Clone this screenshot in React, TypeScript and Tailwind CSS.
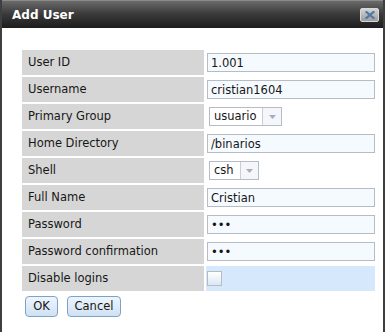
import React from 'react';

type Row =
  | { label: string; kind: 'text'; value: string }
  | { label: string; kind: 'password'; value: string }
  | { label: string; kind: 'select'; value: string; width: string; split: string }
  | { label: string; kind: 'check' };

const rows: Row[] = [
  { label: 'User ID', kind: 'text', value: '1.001' },
  { label: 'Username', kind: 'text', value: 'cristian1604' },
  { label: 'Primary Group', kind: 'select', value: 'usuario', width: 'w-[73px]', split: 'w-[53px]' },
  { label: 'Home Directory', kind: 'text', value: '/binarios' },
  { label: 'Shell', kind: 'select', value: 'csh', width: 'w-[50px]', split: 'w-[31px]' },
  { label: 'Full Name', kind: 'text', value: 'Cristian' },
  { label: 'Password', kind: 'password', value: 'abc' },
  { label: 'Password confirmation', kind: 'password', value: 'abc' },
  { label: 'Disable logins', kind: 'check' },
];

function Field({ row }: { row: Row }) {
  if (row.kind === 'check') {
    return (
      <span className="block ml-[1px] w-[15px] h-[15px] border border-[#b8bcc2] bg-gradient-to-b from-white to-[#dbe7f3]" />
    );
  }
  if (row.kind === 'select') {
    return (
      <div className={`ml-[3px] h-[19px] ${row.width} flex border border-[#b6bcc6] bg-white`}>
        <span className={`${row.split} flex items-center pl-[4px] border-r border-[#c9ced6]`}>{row.value}</span>
        <span className="flex-1 flex items-center justify-center bg-[#f4f6f9]">
          <svg width="7" height="4" viewBox="0 0 7 4">
            <path d="M0 0h7L3.5 4z" fill="#9fb0c9" />
          </svg>
        </span>
      </div>
    );
  }
  return (
    <input
      type={row.kind === 'password' ? 'password' : 'text'}
      readOnly
      value={row.value}
      className="block ml-[1px] w-[168px] h-[19px] border border-[#b6bcc6] bg-[#f5faff] px-[3px] text-[11.5px] text-[#161616] outline-none"
    />
  );
}

export default function App() {
  return (
    <div className="w-[385px] h-[332px] bg-white border-x-2 border-[#3f3f3f] font-['DejaVu_Sans',Verdana,sans-serif] text-[11.5px] text-[#161616] overflow-hidden">
      {/* Title bar */}
      <div className="h-[28px] border-t border-[#8a8a8a] bg-gradient-to-b from-[#6a6a6a] via-[#393939] to-[#1d1d1d] flex items-center justify-between pl-[10px] pr-[4px]">
        <span className="text-white font-bold text-[12px] pt-[1px]">Add User</span>
        <button className="w-[19px] h-[14px] rounded-[2px] border border-[#d8d8d8] bg-gradient-to-b from-[#d4d4d4] to-[#9c9c9c] flex items-center justify-center">
          <svg width="10" height="8" viewBox="0 0 10 8">
            <path d="M1.5 1l7 6M8.5 1l-7 6" stroke="#4d78a8" strokeWidth="2.2" strokeLinecap="square" />
          </svg>
        </button>
      </div>

      {/* Form */}
      <div className="pt-[20px] pl-[18px]">
        <table className="border-separate border-spacing-[2px] w-[357px]">
          <tbody>
            {rows.map((row) => (
              <tr key={row.label}>
                <td className="w-[183px] h-[25px] bg-[#d6d6d6] pl-[6px] p-0 align-middle">{row.label}</td>
                <td className={`h-[25px] p-0 align-middle ${row.kind === 'check' ? 'bg-[#d5e8fc]' : 'bg-white'}`}>
                  <Field row={row} />
                </td>
              </tr>
            ))}
          </tbody>
        </table>
        <div className="flex gap-[9px] pl-[5px] mt-[3px]">
          <button className="w-[33px] h-[21px] rounded-[4px] border border-[#7ea2c7] bg-gradient-to-b from-[#eef5fc] to-[#cfe1f3] text-[11.5px] text-[#161616]">
            OK
          </button>
          <button className="w-[54px] h-[21px] rounded-[4px] border border-[#7ea2c7] bg-gradient-to-b from-[#eef5fc] to-[#cfe1f3] text-[11.5px] text-[#161616]">
            Cancel
          </button>
        </div>
      </div>
    </div>
  );
}
